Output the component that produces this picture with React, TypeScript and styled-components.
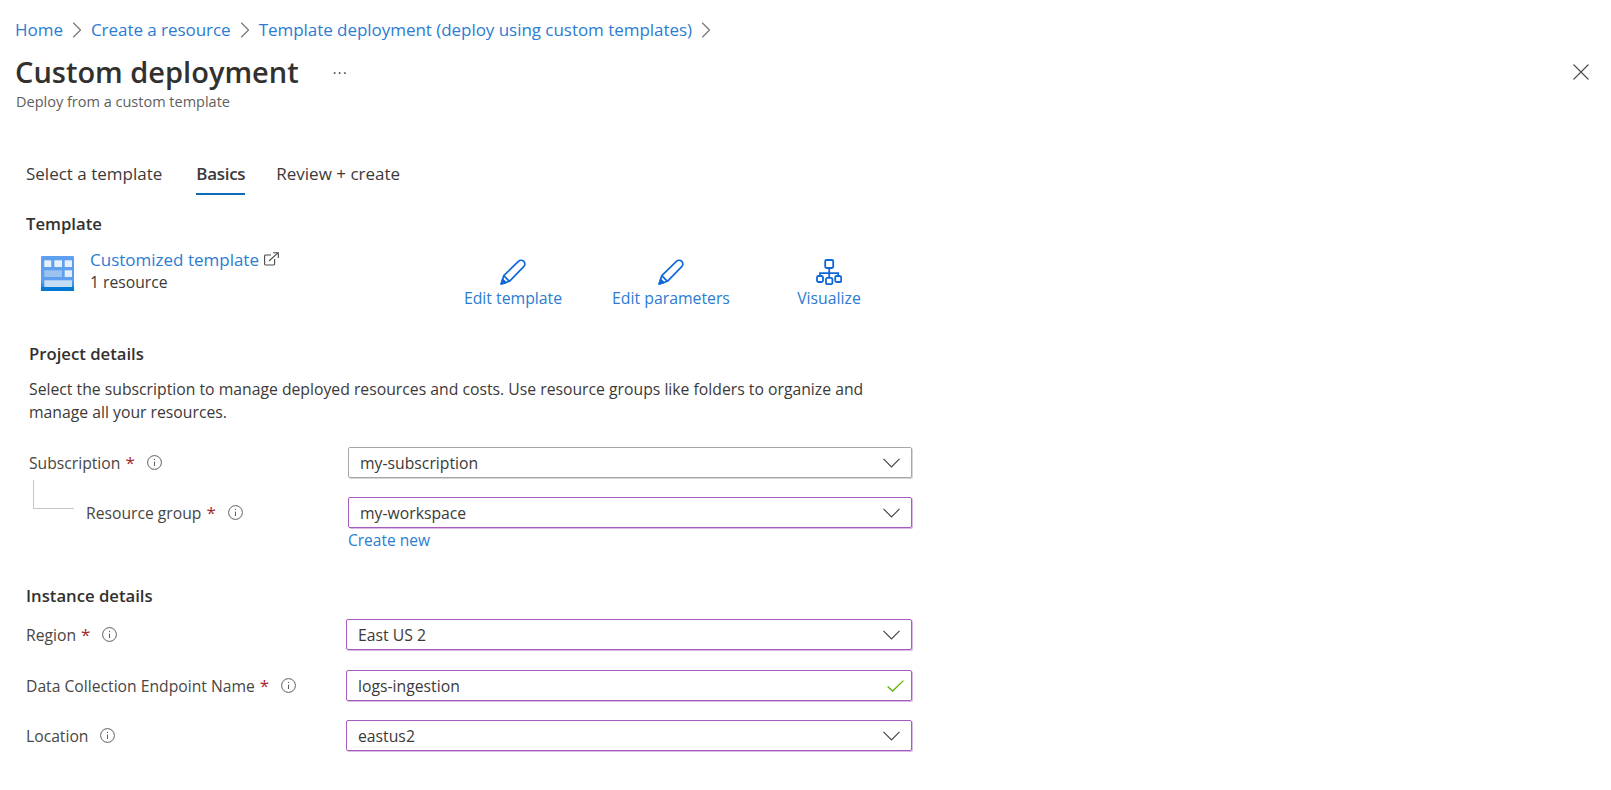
import React from 'react'
import styled, { createGlobalStyle } from 'styled-components'
import { ChevronRight } from 'lucide-react'

const GlobalStyle = createGlobalStyle`
  html, body {
    margin: 0;
    padding: 0;
    background: #fff;
  }
  body {
    font-family: 'Open Sans', 'Noto Sans', sans-serif;
    color: #3b3a39;
    font-size: 15px;
    overflow: hidden;
  }
  * {
    box-sizing: border-box;
  }
`

const Page = styled.div`
  width: 1611px;
  height: 790px;
`

const Breadcrumb = styled.nav`
  display: flex;
  align-items: center;
  height: 20px;
  margin: 20px 0 0 15px;
`
const Crumb = styled.a`
  color: #2b7cd3;
  font-size: 17px;
  line-height: 20px;
  letter-spacing: -0.04px;
`
const CrumbSep = styled.span`
  display: flex;
  width: 28px;
  justify-content: center;
  color: #797775;
`

const TitleRow = styled.div`
  display: flex;
  align-items: center;
  height: 40px;
  margin: 12px 16px 0 15px;
`
const Title = styled.h1`
  margin: 0;
  font-size: 29px;
  font-weight: 600;
  line-height: 40px;
  color: #323130;
`
const More = styled.span`
  margin-left: 34px;
  padding-top: 2px;
  font-size: 14px;
  line-height: 20px;
  letter-spacing: 1.5px;
`
const CloseButton = styled.button`
  display: flex;
  margin-left: auto;
  margin-right: 6px;
  padding: 0;
  border: 0;
  background: none;
  color: #4a4a4a;
`
const Subtitle = styled.div`
  margin-left: 16px;
  font-size: 14.5px;
  line-height: 20px;
  color: #605e5c;
`

const Tabs = styled.div`
  display: flex;
  margin: 52px 0 0 26px;
`
const Tab = styled.div<{ $active?: boolean }>`
  margin-right: ${p => (p.$active ? 31 : 34)}px;
  padding-bottom: 9px;
  font-size: 17px;
  line-height: 20px;
  letter-spacing: ${p => (p.$active ? -0.3 : 0)}px;
  font-weight: ${p => (p.$active ? 600 : 400)};
  border-bottom: 2px solid ${p => (p.$active ? '#0f6cbd' : 'transparent')};
`

const SectionTitle = styled.h2`
  margin: 0;
  font-size: 16.7px;
  line-height: 20px;
  font-weight: 600;
  color: #323130;
`

const TemplateBlock = styled.div`
  margin: 19px 0 0 26px;
`
const TemplateRow = styled.div`
  display: flex;
  margin-top: 15px;
`
const Summary = styled.div`
  display: flex;
  width: 408px;
  padding-left: 15px;
`
const SummaryIcon = styled.svg`
  margin: 7px 16px 0 0;
  flex: none;
`
const SummaryText = styled.div`
  font-size: 15.7px;
  line-height: 22px;
`
const LinkLine = styled.div`
  display: flex;
  align-items: center;
  font-size: 17px;
  color: #2b7cd3;
  svg {
    margin: -3px 0 0 5px;
    color: #4a4a4a;
  }
`
const Action = styled.div`
  display: flex;
  flex-direction: column;
  align-items: center;
  width: 158px;
  padding-top: 10px;
  color: #2b7cd3;
  font-size: 15.8px;
  line-height: 22px;
  svg {
    margin-bottom: 2px;
    color: #1068d8;
  }
`

const ProjectBlock = styled.section`
  margin: 35px 0 0 29px;
`
const Description = styled.p`
  width: 845px;
  margin: 14px 0 23px;
  font-size: 15.75px;
  line-height: 23px;
`
const FormRow = styled.div<{ $label: number; $field: number; $gap?: number }>`
  display: grid;
  grid-template-columns: ${p => p.$label}px ${p => p.$field}px;
  align-items: center;
  margin-bottom: ${p => p.$gap ?? 0}px;
`
const Label = styled.label`
  display: flex;
  align-items: center;
  font-size: 15.7px;
  line-height: 20px;
  color: #484644;
`
const Required = styled.span`
  margin-left: 5px;
  font-size: 17px;
  color: #a4262c;
`
const Info = styled.svg`
  margin-left: 12px;
  color: #605e5c;
`
const Connector = styled.span`
  flex: none;
  align-self: flex-start;
  width: 41px;
  height: 29px;
  margin: -23px 12px 0 4px;
  border-left: 1px solid #c8c6c4;
  border-bottom: 1px solid #c8c6c4;
`
const Field = styled.div<{ $touched?: boolean }>`
  display: flex;
  align-items: center;
  justify-content: space-between;
  height: 31px;
  padding: 0 11px;
  font-size: 15.75px;
  border: 1px solid ${p => (p.$touched ? '#a65cbd' : '#a6a6a6')};
  border-radius: 2px;
  box-shadow: 1px 1px 0 ${p => (p.$touched ? '#dcbbe6' : '#d6d6d6')};
  background: #fff;
`
const FieldIcon = styled.svg<{ $nudge?: number }>`
  flex: none;
  margin-right: ${p => p.$nudge ?? 0}px;
`
const CreateNew = styled.a`
  display: block;
  margin: 2px 0 0 319px;
  font-size: 15.5px;
  line-height: 20px;
  color: #2b7cd3;
`
const InstanceBlock = styled.section`
  margin: 36px 0 0 26px;
`
const InstanceRows = styled.div`
  margin-top: 13px;
`

const Chevron = () => (
  <FieldIcon width="17" height="10" viewBox="0 0 17 10" fill="none" stroke="#484644" strokeWidth="1.2">
    <path d="M0.5 0.8 8.5 8.8 16.5 0.8" />
  </FieldIcon>
)

const Check = () => (
  <FieldIcon $nudge={-4} width="17" height="12" viewBox="0 0 17 12" fill="none" stroke="#5db300" strokeWidth="1.3">
    <path d="M0.6 6.4 5.6 11 16.4 0.6" />
  </FieldIcon>
)

const InfoIcon = () => (
  <Info width="15" height="15" viewBox="0 0 15 15" fill="none" stroke="currentColor">
    <circle cx="7.5" cy="7.5" r="6.9" />
    <path d="M7.5 6.6V11" />
    <circle cx="7.5" cy="4.4" r="0.6" fill="currentColor" stroke="none" />
  </Info>
)

const PencilIcon = () => (
  <svg width="26" height="26" viewBox="0 0 26 26" fill="none" stroke="currentColor" strokeWidth="1.7" strokeLinejoin="round">
    <path d="M1.2 25 3.8 16.6 18.4 2.4C20 .9 22.4 1 23.8 2.4 25.2 3.8 25.2 6.2 23.7 7.7L9.4 22.3Z" />
    <path d="M3.8 16.6 9.4 22.3" />
    <path d="M1.2 25 2.6 20.4 5.8 23.6Z" fill="currentColor" />
  </svg>
)

const HierarchyIcon = () => (
  <svg width="26" height="26" viewBox="0 0 26 26" fill="none" stroke="currentColor" strokeWidth="1.8">
    <rect x="9.2" y="1" width="8" height="8" rx="1.2" />
    <path d="M13.2 9V18.5M4 17V14.2H22.2V17" />
    <rect x="1" y="17" width="6" height="6" rx="1.5" />
    <rect x="10" y="18.8" width="6.4" height="6.4" rx="1.5" />
    <rect x="19.2" y="17" width="6" height="6" rx="1.5" />
  </svg>
)

const TemplateIcon = () => (
  <SummaryIcon width="33" height="35" viewBox="0 0 33 35">
    <defs>
      <linearGradient id="tpl" x1="0" y1="0" x2="0" y2="1">
        <stop offset="0" stopColor="#5ea0ef" />
        <stop offset="0.7" stopColor="#5ea0ef" />
        <stop offset="1" stopColor="#0078d4" />
      </linearGradient>
    </defs>
    <rect width="33" height="35" rx="1" fill="url(#tpl)" />
    <rect y="31" width="33" height="4" fill="#0078d4" />
    <rect x="3.3" y="4.3" width="7" height="6.7" fill="#e6f0fb" />
    <rect x="13.3" y="4.3" width="7.7" height="6.7" fill="#e6f0fb" />
    <rect x="23.7" y="4.3" width="7.3" height="6.7" fill="#e6f0fb" />
    <rect x="3.3" y="14.3" width="17.7" height="6.7" fill="#9cc2f0" />
    <rect x="23.7" y="14.3" width="7.3" height="6.7" fill="#e0edfb" />
    <rect x="3.3" y="24.3" width="27.7" height="6.7" fill="#c6ddf6" />
  </SummaryIcon>
)

const ExternalIcon = () => (
  <svg width="15" height="14" viewBox="0 0 15 14" fill="none" stroke="currentColor" strokeWidth="1.1">
    <path d="M7 3H1.5C1 3 .6 3.4 .6 3.9V12.1C.6 12.6 1 13 1.5 13H9.7C10.2 13 10.6 12.6 10.6 12.1V7" />
    <path d="M5 9 14 .8M9 .7H14.3V6" />
  </svg>
)

const Sep = () => (
  <CrumbSep><ChevronRight size={28} strokeWidth={1} /></CrumbSep>
)

const App = () => {
  return (
    <Page>
      <GlobalStyle />
      <Breadcrumb>
        <Crumb>Home</Crumb>
        <Sep />
        <Crumb>Create a resource</Crumb>
        <Sep />
        <Crumb>Template deployment (deploy using custom templates)</Crumb>
        <Sep />
      </Breadcrumb>
      <TitleRow>
        <Title>Custom deployment</Title>
        <More>···</More>
        <CloseButton aria-label="Close">
          <svg width="16" height="16" viewBox="0 0 16 16" fill="none" stroke="currentColor" strokeWidth="1.1">
            <path d="M.5 .5 15.5 15.5M15.5 .5 .5 15.5" />
          </svg>
        </CloseButton>
      </TitleRow>
      <Subtitle>Deploy from a custom template</Subtitle>
      <Tabs>
        <Tab>Select a template</Tab>
        <Tab $active>Basics</Tab>
        <Tab>Review + create</Tab>
      </Tabs>
      <TemplateBlock>
        <SectionTitle>Template</SectionTitle>
        <TemplateRow>
          <Summary>
            <TemplateIcon />
            <SummaryText>
              <LinkLine>Customized template<ExternalIcon /></LinkLine>
              <div>1 resource</div>
            </SummaryText>
          </Summary>
          <Action><PencilIcon />Edit template</Action>
          <Action><PencilIcon />Edit parameters</Action>
          <Action><HierarchyIcon />Visualize</Action>
        </TemplateRow>
      </TemplateBlock>
      <ProjectBlock>
        <SectionTitle>Project details</SectionTitle>
        <Description>
          Select the subscription to manage deployed resources and costs. Use resource groups like folders to organize and manage all your resources.
        </Description>
        <FormRow $label={319} $field={564} $gap={19}>
          <Label>Subscription<Required>*</Required><InfoIcon /></Label>
          <Field>my-subscription<Chevron /></Field>
        </FormRow>
        <FormRow $label={319} $field={564}>
          <Label><Connector />Resource group<Required>*</Required><InfoIcon /></Label>
          <Field $touched>my-workspace<Chevron /></Field>
        </FormRow>
        <CreateNew>Create new</CreateNew>
      </ProjectBlock>
      <InstanceBlock>
        <SectionTitle>Instance details</SectionTitle>
        <InstanceRows>
          <FormRow $label={320} $field={566} $gap={20}>
            <Label>Region<Required>*</Required><InfoIcon /></Label>
            <Field $touched>East US 2<Chevron /></Field>
          </FormRow>
          <FormRow $label={320} $field={566} $gap={19}>
            <Label>Data Collection Endpoint Name<Required>*</Required><InfoIcon /></Label>
            <Field $touched>logs-ingestion<Check /></Field>
          </FormRow>
          <FormRow $label={320} $field={566}>
            <Label>Location<InfoIcon /></Label>
            <Field $touched>eastus2<Chevron /></Field>
          </FormRow>
        </InstanceRows>
      </InstanceBlock>
    </Page>
  )
}

export default App
